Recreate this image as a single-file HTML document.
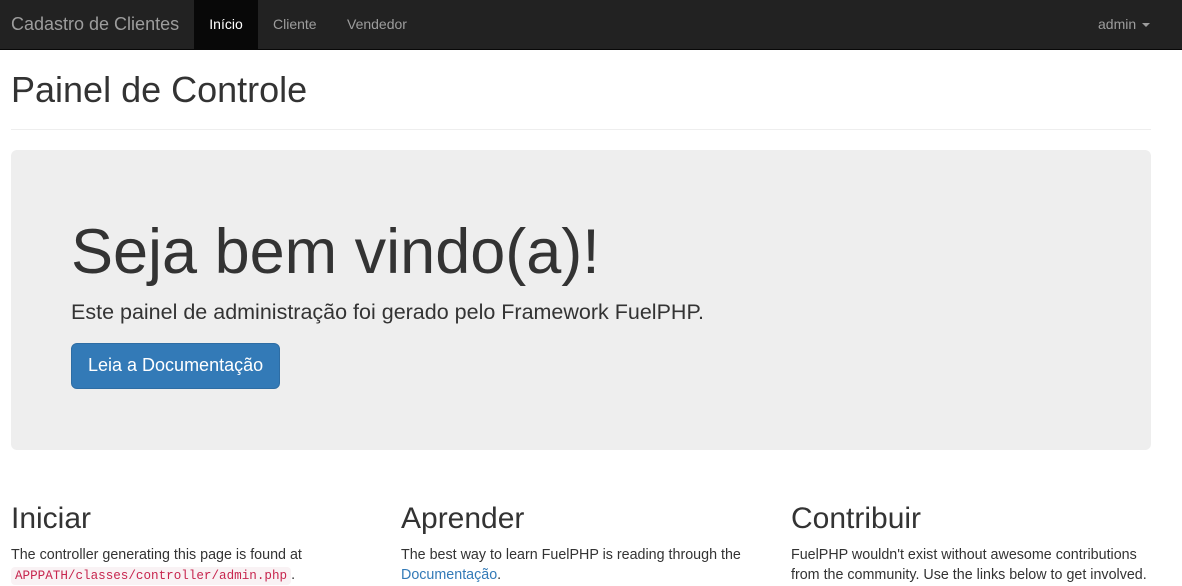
<!DOCTYPE html>
<html><head><meta charset="utf-8"><style>
*{box-sizing:border-box}
body{margin:0;font-family:"Liberation Sans",sans-serif;font-size:14px;line-height:1.42857;color:#333;background:#fff;overflow:hidden;height:573px}
.nav{height:50px;background:#222;border-bottom:1px solid #080808;position:relative}
.nav a{position:absolute;top:0;line-height:49px;color:#9d9d9d;text-decoration:none}
.brand{left:11px;font-size:18px}
.act{left:194px;width:64px;background:#080808;color:#fff!important;text-align:center}
.c{padding-left:11px;width:1151px}
h1.ph{font-size:36px;font-weight:500;margin:20px 0 20px;padding-bottom:19px;border-bottom:1px solid #eee;line-height:1.1;padding-top:0}
.jumbo{background:#eee;border-radius:6px;padding:48px 60px 48px;height:300px}
.jumbo h1{font-size:63px;font-weight:500;margin:20px 0 10px;line-height:1.1}
.jumbo p{font-size:21.5px;margin:0 0 15px}
.btn{display:inline-block;background:#337ab7;border:1px solid #2e6da4;color:#fff;font-size:18px;padding:10px 16px;border-radius:6px;line-height:1.3333}
.row{display:flex;margin-top:32px}
.col{width:390px;flex-shrink:0}
.col h2{font-size:30px;font-weight:500;margin:20px 0 10px;line-height:1.1}
.col p{margin:0;width:360px;font-size:14.3px;line-height:20px}
code{font-family:"Liberation Mono",monospace;font-size:12.6px;color:#c7254e;background:#f9f2f4;padding:2px 4px;border-radius:4px}
a.l{color:#337ab7}
</style></head><body>
<div class="nav">
<a class="brand">Cadastro de Clientes</a>
<a class="act">Início</a>
<a style="left:273px">Cliente</a>
<a style="left:347px">Vendedor</a>
<a style="left:1098px">admin <span style="display:inline-block;width:0;height:0;border-top:4px solid #9d9d9d;border-left:4px solid transparent;border-right:4px solid transparent;vertical-align:middle;margin-left:2px"></span></a>
</div>
<div class="c">
<h1 class="ph">Painel de Controle</h1>
<div class="jumbo">
<h1>Seja bem vindo(a)!</h1>
<p>Este painel de administração foi gerado pelo Framework FuelPHP.</p>
<span class="btn">Leia a Documentação</span>
</div>
<div class="row">
<div class="col"><h2>Iniciar</h2><p>The controller generating this page is found at <code>APPPATH/classes/controller/admin.php</code>.</p></div>
<div class="col"><h2>Aprender</h2><p>The best way to learn FuelPHP is reading through the <a class="l">Documentação</a>.</p></div>
<div class="col"><h2>Contribuir</h2><p>FuelPHP wouldn't exist without awesome contributions from the community. Use the links below to get involved.</p></div>
</div>
</div>
</body></html>
